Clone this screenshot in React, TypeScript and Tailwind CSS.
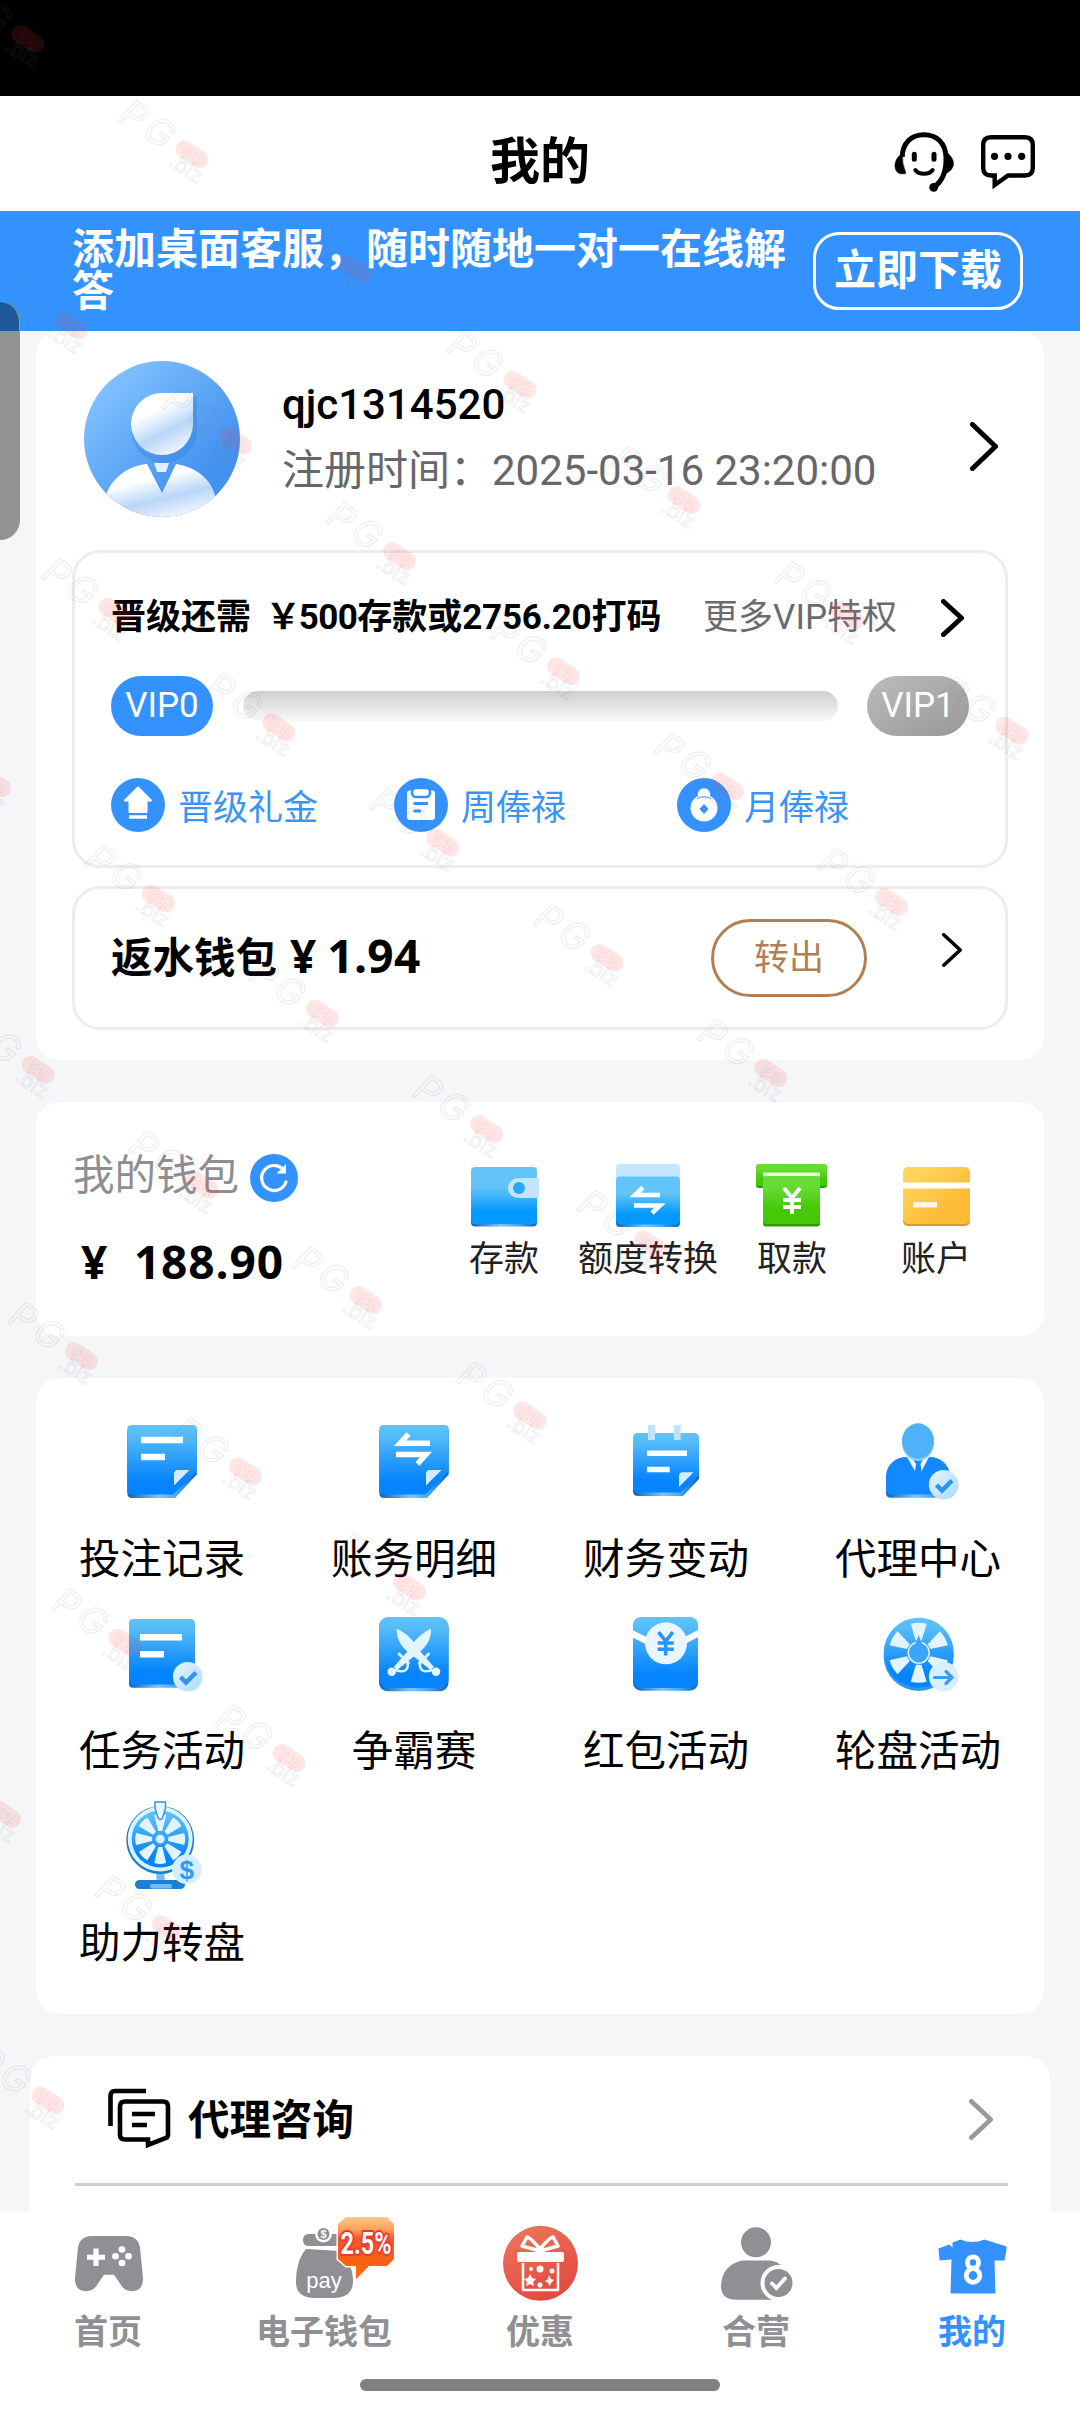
import type { ReactNode } from "react";

const NAV_GRAY = "#8f8f94";

function Defs() {
  return (
    <svg width="0" height="0" className="absolute">
      <defs>
        <linearGradient id="blue" x1="0" y1="0" x2="0" y2="1">
          <stop offset="0" stopColor="#5fc4f8" />
          <stop offset="0.15" stopColor="#56bbf8" />
          <stop offset="0.8" stopColor="#0584fe" />
          <stop offset="1" stopColor="#0584fe" />
        </linearGradient>
        <linearGradient id="sky" x1="0" y1="0" x2="0" y2="1">
          <stop offset="0.35" stopColor="#63c4f8" />
          <stop offset="0.78" stopColor="#0499ff" />
        </linearGradient>
        <linearGradient id="edge" x1="0" y1="0" x2="1" y2="0">
          <stop offset="0" stopColor="#0a63b8" />
          <stop offset="0.45" stopColor="#7cc4fb" />
          <stop offset="0.7" stopColor="#4aa8f8" />
          <stop offset="1" stopColor="#0a63b8" />
        </linearGradient>
        <linearGradient id="pale" x1="0" y1="0" x2="1" y2="1">
          <stop offset="0" stopColor="#e8f6ff" />
          <stop offset="1" stopColor="#a9daff" />
        </linearGradient>
        <linearGradient id="green" x1="0" y1="0" x2="0" y2="1">
          <stop offset="0.2" stopColor="#68dc36" />
          <stop offset="0.7" stopColor="#45c806" />
        </linearGradient>
        <linearGradient id="gold" x1="0" y1="0" x2="1" y2="1">
          <stop offset="0.2" stopColor="#ffd45a" />
          <stop offset="0.7" stopColor="#fcbb36" />
        </linearGradient>
        <linearGradient id="avatar" x1="0" y1="0" x2="1" y2="1">
          <stop offset="0.1" stopColor="#84c4ff" />
          <stop offset="0.75" stopColor="#4392ef" />
        </linearGradient>
        <linearGradient id="face" x1="0.2" y1="0" x2="0.7" y2="1">
          <stop offset="0.3" stopColor="#fff" />
          <stop offset="0.65" stopColor="#b9d6f7" />
          <stop offset="1" stopColor="#f4f8ff" />
        </linearGradient>
        <linearGradient id="red" x1="0" y1="0" x2="0.5" y2="1">
          <stop offset="0" stopColor="#ea7a5c" />
          <stop offset="1" stopColor="#e44b41" />
        </linearGradient>
        <linearGradient id="badge" x1="0" y1="0" x2="0" y2="1">
          <stop offset="0" stopColor="#ffc98a" />
          <stop offset="0.2" stopColor="#fda05c" />
          <stop offset="0.35" stopColor="#f2552a" />
          <stop offset="1" stopColor="#ff6a00" />
        </linearGradient>
      </defs>
    </svg>
  );
}

function Chevron({
  width,
  height,
  stroke,
  color = "#000",
}: {
  width: number;
  height: number;
  stroke: number;
  color?: string;
}) {
  const pad = stroke / 2;
  return (
    <svg width={width} height={height} className="block shrink-0">
      <path
        d={`M${pad} ${pad}L${width - pad} ${height / 2}L${pad} ${height - pad}`}
        fill="none"
        stroke={color}
        strokeWidth={stroke}
        strokeLinecap="round"
        strokeLinejoin="round"
      />
    </svg>
  );
}

function ServiceIcon() {
  return (
    <svg width="62" height="64" viewBox="0 0 62 64" fill="none" stroke="#000">
      <path d="M9.200 26C9.500 12 18 3.800 31 3.800S52.500 12 53 26C53.500 40 50 50 41 56" strokeWidth="5" />
      <path d="M9 23C1 27 -1 40 7 42.800H12.500V40.500Q9 33 9.500 23Z" fill="#000" strokeWidth="0.500" />
      <path d="M53 21C62 27 64 37 53 42.500Q56 32 53 21Z" fill="#000" strokeWidth="0.500" />
      <path d="M21.300 23.300v5M41 23.300v5" strokeWidth="5" strokeLinecap="round" />
      <path d="M22.300 39C26 44 36 44 39.700 39" strokeWidth="4" strokeLinecap="round" />
      <circle cx="40.700" cy="56.300" r="4.400" fill="#000" stroke="none" />
    </svg>
  );
}

function MessageIcon() {
  return (
    <svg width="56" height="56" viewBox="0 0 56 56" fill="none">
      <path
        d="M10 2.200H44Q51.800 2.200 51.800 10V33Q51.800 40.500 44 40.500H27L13.700 50V40.500H10Q2.200 40.500 2.200 33V10Q2.200 2.200 10 2.200Z"
        stroke="#000"
        strokeWidth="4.400"
      />
      <circle cx="13.500" cy="21.300" r="3.600" fill="#000" />
      <circle cx="27" cy="21.300" r="3.600" fill="#000" />
      <circle cx="40.700" cy="21.300" r="3.600" fill="#000" />
    </svg>
  );
}

function Avatar() {
  return (
    <svg width="156" height="156" viewBox="0 0 156 156" className="shrink-0">
      <clipPath id="avatarClip">
        <circle cx="78" cy="78" r="78" />
      </clipPath>
      <g clipPath="url(#avatarClip)">
        <rect width="156" height="156" fill="url(#avatar)" />
        <path d="M78 36H113V66A33 33 0 1 1 78 36Z" fill="#2f7fe0" opacity="0.35" />
        <path d="M78 32H109V63A31 31 0 1 1 78 32Z" fill="url(#face)" />
        <path d="M22 156V134C27 119 42 105 63 103L78 132L92 103C113 106 127 119 131 134V156Z" fill="url(#face)" />
        <path d="M70 102H85L82 111H73Z" fill="#e6f0fd" />
      </g>
    </svg>
  );
}

function UpIcon() {
  return (
    <>
      <path d="M27 9.500L40 22.500H35.500V34H18.500V22.500H14Z" fill="#fff" stroke="#fff" strokeWidth="2" strokeLinejoin="round" />
      <path d="M18 39H36" stroke="#fff" strokeWidth="3.500" />
    </>
  );
}

function ClipIcon() {
  return (
    <>
      <rect x="13" y="12.500" width="28" height="29.500" rx="3" fill="#fff" />
      <rect x="18" y="10" width="18" height="9" rx="4" fill="#fff" stroke="#3492ff" strokeWidth="2.500" />
      <path d="M19.500 25.500H34M19.500 33H27" stroke="#3492ff" strokeWidth="3" />
    </>
  );
}

function PouchIcon() {
  return (
    <>
      <circle cx="27" cy="16.500" r="6.300" fill="#fff" />
      <circle cx="27" cy="30" r="13.500" fill="#fff" />
      <path d="M17 38H37Q35 43 27 43T17 38Z" fill="#fff" />
      <path d="M20 20.500Q27 17 34 20.500" stroke="#3492ff" strokeWidth="1" fill="none" />
      <path d="M27 26L31.500 31L27 36L22.500 31Z" fill="#3492ff" />
    </>
  );
}

function BonusItem({ label, children }: { label: string; children: ReactNode }) {
  return (
    <div className="flex w-[283px] items-center">
      <svg width="54" height="54" viewBox="0 0 54 54">
        <circle cx="27" cy="27" r="27" fill="#3492ff" />
        {children}
      </svg>
      <span className="mt-1 -mb-1 ml-[13px] text-[35px] leading-[54px] text-[#3a95f2]">{label}</span>
    </div>
  );
}

function YenMark({ color = "#fff" }: { color?: string }) {
  return <path d="M-8-12L0-2L8-12M0-2V14M-9 0H9M-9 7H9" stroke={color} strokeWidth="4" fill="none" />;
}

function DepositIcon() {
  return (
    <>
      <rect x="3" y="5" width="66" height="57.500" rx="4" fill="url(#edge)" />
      <rect x="3" y="3" width="66" height="57" rx="4" fill="url(#sky)" />
      <path d="M71 14H50A10 10 0 0 0 50 34H71Z" fill="#c2e5ff" />
      <circle cx="51" cy="24" r="6" fill="#2aa7fb" />
    </>
  );
}

function TransferIcon() {
  return (
    <>
      <rect x="4" y="0" width="64" height="26" rx="4" fill="#c5e6ff" />
      <rect x="4" y="14" width="64" height="49" rx="4" fill="url(#edge)" />
      <rect x="4" y="12.500" width="64" height="48" rx="4" fill="url(#sky)" />
      <path d="M48 31H23L31 23.500M22 41.500H48L40 49" stroke="#fff" strokeWidth="4.500" fill="none" />
    </>
  );
}

function WithdrawIcon() {
  return (
    <>
      <rect x="0" y="2" width="71" height="22" rx="3" fill="#2f9a05" />
      <rect x="0" y="0" width="71" height="22" rx="3" fill="url(#green)" />
      <rect x="7" y="8.500" width="57" height="4" fill="#e5fbd8" />
      <rect x="7" y="13" width="57" height="49.500" rx="3" fill="#2f9a05" />
      <rect x="7" y="12" width="57" height="48" rx="3" fill="url(#green)" />
      <g transform="translate(36 36)">
        <YenMark />
      </g>
    </>
  );
}

function AccountIcon() {
  return (
    <>
      <rect x="3" y="5" width="67" height="57" rx="5" fill="#dc9a1f" />
      <rect x="3" y="3" width="67" height="57" rx="5" fill="url(#gold)" />
      <rect x="2" y="18.500" width="69" height="6" fill="#fff" />
      <rect x="13" y="38" width="24" height="5.500" fill="#fff8e0" />
    </>
  );
}

function PageShape({ children }: { children: ReactNode }) {
  return (
    <>
      <path d="M17 17H79Q82.700 17 82.700 21V64.500L61 88H18Q13.300 88 13.300 83V21Z" fill="url(#edge)" />
      <path d="M17.500 15H78.500Q82.700 15 82.700 19V61.500L59 84.500H17.500Q13.300 84.500 13.300 80.500V19Q13.300 15 17.500 15Z" fill="url(#blue)" />
      <path d="M75.500 60H64Q60 60 60 64V75.500Z" fill="#d3ecff" />
      {children}
    </>
  );
}

function CheckBadge() {
  return (
    <>
      <circle cx="73.700" cy="74.700" r="14.800" fill="url(#pale)" />
      <path d="M66.500 75L72 80.500L82 70.500" stroke="#2e93f5" strokeWidth="4.500" fill="none" />
    </>
  );
}

// a light wedge pointing up from the hub, rotated around the wheel
function Spokes({ count, cx, cy, inner, outer, half }: { count: number; cx: number; cy: number; inner: number; outer: number; half: number }) {
  return (
    <>
      {Array.from({ length: count }, (_, i) => (
        <path
          key={i}
          d={`M${cx - half * 0.35} ${cy - inner}L${cx - half} ${cy - outer + 1}Q${cx} ${cy - outer - 1} ${cx + half} ${cy - outer + 1}L${cx + half * 0.35} ${cy - inner}Z`}
          transform={`rotate(${(360 / count) * i} ${cx} ${cy})`}
          fill="#e3f4ff"
        />
      ))}
    </>
  );
}

function BetRecordIcon() {
  return (
    <PageShape>
      <path d="M27 30H69M27 47H51" stroke="#fff" strokeWidth="6.400" />
    </PageShape>
  );
}

function StatementIcon() {
  return (
    <PageShape>
      <path d="M64 33.300H34L42.500 24M30 44.500H60L51.500 54" stroke="#fff" strokeWidth="5.400" fill="none" />
    </PageShape>
  );
}

function FinanceIcon() {
  return (
    <>
      <path d="M20 26H76Q81 26 81 31V69L65 86H20Q15 86 15 81Z" fill="url(#edge)" />
      <path d="M20 23H76Q81 23 81 28V66L62 82.500H20Q15 82.500 15 77.500V28Q15 23 20 23Z" fill="url(#blue)" />
      <path d="M33.500 15V30M59.200 15V30" stroke="#bfe3ff" strokeWidth="7" />
      <path d="M29 43.200H69M29 59.500H51.700" stroke="#fff" strokeWidth="5.600" />
      <path d="M75.500 62.300H65Q61 62.300 61 66V77Z" fill="#d3ecff" />
    </>
  );
}

function AgentIcon() {
  return (
    <>
      <path d="M16 70V83Q16 87.700 21 87.700H75Q80 87.700 80 83V70Z" fill="url(#edge)" />
      <path d="M16 65C17 54 26 47 36 47H60C70 47 79 54 80 65V84.500H20Q16 84.500 16 80Z" fill="#1289fe" />
      <path d="M37 47L45.500 62L47 50H49L51 62L59 47Z" fill="#eff8ff" />
      <path d="M43.500 50H52.500L50.500 54L51.500 61L48 64L45 61L46 54Z" fill="#1289fe" />
      <ellipse cx="48" cy="32.500" rx="16" ry="18.500" fill="#8fcdfb" />
      <ellipse cx="48" cy="31" rx="16" ry="17.700" fill="#4db2f8" />
      <CheckBadge />
    </>
  );
}

function TaskIcon() {
  return (
    <>
      <rect x="15" y="19" width="65.700" height="66.700" rx="4" fill="url(#edge)" />
      <rect x="15" y="17" width="65.700" height="65.500" rx="4" fill="url(#blue)" />
      <path d="M26 35.200H68M26 52.300H50" stroke="#fff" strokeWidth="6.400" />
      <CheckBadge />
    </>
  );
}

function SwordsIcon() {
  const sword = (
    <>
      <path d="M30.700 26.700C41 31 48 39 53 48L68 65L64.500 68L46 53C37 47 30 38 30.700 26.700Z" />
      <circle cx="70" cy="69.700" r="4.300" />
      <path d="M54 60C53 69 58 71 66 68" fill="none" stroke="#e3f4ff" strokeWidth="2.600" strokeLinecap="round" />
      <path d="M53.500 61L62.500 52" stroke="#e3f4ff" strokeWidth="3" strokeLinecap="round" />
    </>
  );
  return (
    <>
      <rect x="13" y="17" width="69.500" height="72.300" rx="9" fill="url(#edge)" />
      <rect x="13" y="15" width="69.500" height="71" rx="9" fill="url(#blue)" />
      <g fill="#e3f4ff">
        {sword}
        <g transform="translate(95.700 0) scale(-1 1)">{sword}</g>
      </g>
    </>
  );
}

function RedPacketIcon() {
  return (
    <>
      <rect x="15" y="17" width="65" height="71.700" rx="8" fill="url(#edge)" />
      <rect x="15" y="15" width="65" height="71" rx="8" fill="url(#blue)" />
      <path d="M14 31.500L32 40.500M81 31L63 40.500" stroke="#fff" strokeWidth="6.500" />
      <circle cx="48" cy="41.300" r="21" fill="#eaf6ff" />
      <g transform="translate(47.700 41) scale(0.900)">
        <YenMark color="#2b95f5" />
      </g>
    </>
  );
}

function WheelIcon() {
  return (
    <>
      <circle cx="48.700" cy="54" r="35" fill="#2f9ae8" />
      <circle cx="48.700" cy="50.700" r="35" fill="url(#blue)" />
      <Spokes count={6} cx={48.7} cy={50.7} inner={12} outer={30} half={8} />
      <circle cx="48.700" cy="50.700" r="10.500" fill="#3ba6f8" stroke="#d9f0ff" strokeWidth="1.500" />
      <path d="M48.700 33L52 42H45.500Z" fill="#3ba6f8" />
      <circle cx="73.700" cy="74.700" r="14.800" fill="#d9efff" />
      <path d="M64.500 75.500H82M76 69.500L82 75.500L76 81.500" stroke="#3a9cf5" strokeWidth="3.200" fill="none" strokeLinecap="round" />
    </>
  );
}

function BoostWheelIcon() {
  return (
    <>
      <path d="M42.400 78H50.600V90H42.400Z" fill="#7bbdeb" />
      <rect x="21" y="86" width="50" height="9" rx="4.500" fill="#1b80cf" />
      <rect x="36" y="90" width="22" height="4.500" rx="2" fill="#6fbdf5" />
      <circle cx="46.200" cy="46" r="34" fill="#1c7fc9" />
      <circle cx="46.200" cy="45" r="32.500" fill="#d9f3ff" />
      <circle cx="46.200" cy="45" r="28.500" fill="url(#blue)" />
      <Spokes count={8} cx={46.2} cy={45} inner={8} outer={25} half={6} />
      <circle cx="46.200" cy="45" r="5" fill="#d9f3ff" stroke="#4aacf8" strokeWidth="1.500" />
      <path d="M41 8H51.500V14L48.500 24Q46.200 27 44 24L41 14Z" fill="#e9f8ff" stroke="#3794dc" strokeWidth="1.500" />
      <circle cx="72.700" cy="75.300" r="14.700" fill="#d3eeff" />
      <text x="72.700" y="84.500" textAnchor="middle" fontSize="26" fontWeight="700" fill="#319af3" fontFamily="Liberation Sans, sans-serif">
        $
      </text>
    </>
  );
}

const walletActions = [
  { label: "存款", icon: <DepositIcon /> },
  { label: "额度转换", icon: <TransferIcon /> },
  { label: "取款", icon: <WithdrawIcon /> },
  { label: "账户", icon: <AccountIcon /> },
];

const menuItems = [
  { label: "投注记录", icon: <BetRecordIcon /> },
  { label: "账务明细", icon: <StatementIcon /> },
  { label: "财务变动", icon: <FinanceIcon /> },
  { label: "代理中心", icon: <AgentIcon /> },
  { label: "任务活动", icon: <TaskIcon /> },
  { label: "争霸赛", icon: <SwordsIcon /> },
  { label: "红包活动", icon: <RedPacketIcon /> },
  { label: "轮盘活动", icon: <WheelIcon /> },
  { label: "助力转盘", icon: <BoostWheelIcon /> },
];

function HomeTabIcon() {
  return (
    <g transform="translate(15 22) scale(1 0.970)">
      <path
        d="M17 3H51Q63 3 65 15L68 47Q68 60 57 60Q49 60 45 52L39 43H29L23 52Q19 60 11 60Q0 60 0 47L3 15Q5 3 17 3Z"
        fill={NAV_GRAY}
      />
      <path d="M12 25H30M21 16V34" stroke="#fff" strokeWidth="5.200" />
      <circle cx="47" cy="17" r="3.400" fill="#fff" />
      <circle cx="47" cy="31" r="3.400" fill="#fff" />
      <circle cx="40.500" cy="24" r="3.400" fill="#fff" />
      <circle cx="53.500" cy="24" r="3.400" fill="#fff" />
    </g>
  );
}

function WalletTabIcon() {
  return (
    <g transform="translate(7 -2)">
      <path d="M26 25H56V37H26Q20 37 20 31T26 25Z" fill={NAV_GRAY} />
      <circle cx="40.500" cy="25" r="8.500" fill="#fff" />
      <circle cx="40.500" cy="25" r="6" fill={NAV_GRAY} />
      <text x="40.500" y="29" fontSize="11" textAnchor="middle" fill="#fff" fontWeight="700" fontFamily="Liberation Sans, sans-serif">
        $
      </text>
      <path d="M23 40L58 42C66 51 70 62 70 72Q70 89 50 89H32Q13 89 13 73C13 60 16 48 23 40Z" fill={NAV_GRAY} />
      <text x="41" y="79" fontSize="22" textAnchor="middle" fill="#fff" fontFamily="Liberation Sans, sans-serif">
        pay
      </text>
      <path
        d="M63 8H104L111 15V50L104 57H86L73 70V57H63L55 50V15Z"
        fill="url(#badge)"
        stroke="#fff"
        strokeWidth="3"
        paintOrder="stroke"
      />
      <text
        x="83"
        y="45"
        fontSize="32"
        textAnchor="middle"
        textLength="51"
        lengthAdjust="spacingAndGlyphs"
        fill="#fff"
        stroke="#e83a2c"
        strokeWidth="4"
        strokeLinejoin="round"
        paintOrder="stroke"
        fontWeight="700"
        fontFamily="Roboto, sans-serif"
      >
        2.5%
      </text>
    </g>
  );
}

function OfferTabIcon() {
  return (
    <g transform="translate(0 -2)">
      <circle cx="48.500" cy="54.300" r="37.500" fill="url(#red)" />
      <g fill="none" stroke="#fff" strokeWidth="2.500" strokeLinejoin="round">
        <path d="M48 42L30 37L35 28Q37 27 48 40M48 42L66 37L61 28Q59 27 48 40" strokeWidth="3.500" />
        <path d="M31 54V81H66V54" />
      </g>
      <rect x="25" y="43" width="47" height="10" rx="2" fill="#fff" />
      <ellipse cx="48" cy="41" rx="5" ry="3.500" fill="#fff" />
      <path d="M38 65L40 69L44 70L41 73L42 77L38 75L34 77L35 73L32 70L36 69ZM57 66L59 70L62 71L59 74L58 77L56 74L53 72L56 70Z" fill="#fff" />
      <circle cx="48" cy="60" r="3.500" fill="#fff" />
      <circle cx="60" cy="62" r="2.500" fill="#fff" />
      <circle cx="48" cy="76" r="2.500" fill="#fff" />
      <circle cx="39" cy="60" r="2" fill="#fff" />
    </g>
  );
}

function PartnerTabIcon() {
  return (
    <>
      <circle cx="48" cy="31.300" r="15" fill={NAV_GRAY} />
      <path d="M34 49.500H62Q78 51 78 72V88.700H28Q13 88.700 13 75Q14 54 34 49.500Z" fill={NAV_GRAY} />
      <circle cx="70.500" cy="72" r="18" fill="#fff" />
      <path d="M62 84H90V92H66Z" fill="#fff" />
      <path d="M72 50H90V60H80Z" fill="#fff" />
      <circle cx="70.500" cy="72" r="14" fill={NAV_GRAY} />
      <path d="M64 72.500L68.500 77L77 67.500" stroke="#fff" strokeWidth="3.800" fill="none" strokeLinecap="round" />
    </>
  );
}

function MineTabIcon() {
  return (
    <g transform="translate(0.500 -1.500)">
      <path d="M36 30Q48 35 60 30L82 37V40L80 51H70L71 84H26L27 50L15 51L14 39L25 35L28 38L28 33Z" fill="#3492ff" />
      <g fill="none" stroke="#fff" strokeWidth="4.800">
        <circle cx="48.500" cy="53" r="5.600" />
        <circle cx="48.500" cy="66" r="6.800" />
      </g>
    </g>
  );
}

const tabs = [
  { label: "首页", icon: <HomeTabIcon /> },
  { label: "电子钱包", icon: <WalletTabIcon /> },
  { label: "优惠", icon: <OfferTabIcon /> },
  { label: "合营", icon: <PartnerTabIcon /> },
  { label: "我的", icon: <MineTabIcon />, active: true },
];

function watermarkPoints() {
  const points: [number, number][] = [];
  for (let row = 0; row < 9; row++) {
    for (let col = -2; col + row <= 6; col++) {
      if (row === 0 && col < 0) continue;
      points.push([28 + col * 164 + row * 43.5, 39 + col * 115.3 + row * 286.5]);
    }
  }
  return points.filter(([x, y]) => x > -40 && y > 0);
}

function Watermark() {
  return (
    <svg className="pointer-events-none absolute inset-0 z-20" width="1080" height="2412">
      {watermarkPoints().map(([x, y]) => (
        <g key={`${x}-${y}`} transform={`translate(${x} ${y}) rotate(33)`}>
          <text
            x="-82"
            y="12"
            fontSize="37"
            fontStyle="italic"
            letterSpacing="5"
            fill="none"
            stroke="#777"
            strokeOpacity="0.15"
            strokeWidth="1.2"
            fontFamily="Inter, sans-serif"
          >
            PG
          </text>
          <rect x="-18" y="-9" width="36" height="18" rx="9" fill="#ff3b3b" fillOpacity="0.13" />
          <text x="-11" y="5" fontSize="12" fill="#b43c3c" fillOpacity="0.1" fontFamily="'Noto Sans CJK SC', sans-serif">
            论坛
          </text>
          <text x="-15" y="22" fontSize="21" fill="none" stroke="#777" strokeOpacity="0.15" fontFamily="Inter, sans-serif">
            .biz
          </text>
        </g>
      ))}
    </svg>
  );
}

export default function App() {
  return (
    <div className="relative flex h-[2412px] w-[1080px] flex-col overflow-hidden bg-[#f4f6f8] font-[Roboto,'Noto_Sans_CJK_SC',sans-serif] text-black">
      <Defs />
      <div className="h-24 shrink-0 bg-black" />

      <header className="relative flex h-[115px] shrink-0 items-center justify-center bg-white">
        <h1 className="pt-[17px] text-[50px] leading-[60px] font-bold">我的</h1>
        <div className="absolute top-[35px] right-[43px] flex items-start gap-[26px]">
          <ServiceIcon />
          <span className="pt-1">
            <MessageIcon />
          </span>
        </div>
      </header>

      <div className="flex h-[120px] shrink-0 items-start bg-[#3492ff] pr-[57px] pl-[72px] font-bold text-white">
        <p className="w-[720px] pt-[18px] text-[42px] leading-[42px]">添加桌面客服，随时随地一对一在线解答</p>
        <button className="mt-[21px] ml-auto flex h-[78px] w-[210px] items-center justify-center rounded-[26px] border-[3px] border-white text-[42px] leading-none">
          立即下载
        </button>
      </div>

      <section className="mx-9 h-[729px] shrink-0 rounded-3xl bg-white px-9">
        <div className="flex h-[219px] items-start pt-[30px] pl-3">
          <Avatar />
          <div className="ml-[42px] pt-[16px]">
            <div className="text-[42px] leading-[56px] font-medium">qjc1314520</div>
            <div className="mt-[10px] text-[42px] leading-[56px] text-[#67676b]">注册时间：2025-03-16 23:20:00</div>
          </div>
          <div className="mt-[61px] mr-[10px] ml-auto">
            <Chevron width={28} height={49} stroke={5} />
          </div>
        </div>

        <div className="h-[318px] rounded-[28px] border-[3px] border-[#ededed] px-9">
          <div className="mt-[38px] flex h-[50px] items-center pt-1 whitespace-nowrap">
            <span className="text-[35px] font-bold">
              晋级还需 <span className="ml-1.5 -mr-0.5">￥</span>
              <span className="tracking-[-0.6px]">500</span>存款或<span className="tracking-[-0.2px]">2756.20</span>打码
            </span>
            <span className="ml-auto text-[35px] text-[#6b6b6f]">更多VIP特权</span>
            <span className="mr-[5px] ml-[44px]">
              <Chevron width={23} height={38} stroke={5} />
            </span>
          </div>
          <div className="mt-[35px] flex h-[60px] items-center justify-between">
            <span className="flex h-[60px] w-[102px] items-center justify-center rounded-full bg-[#3492ff] text-[35px] text-white">VIP0</span>
            <span className="h-[30px] w-[595px] rounded-full bg-linear-to-b from-[#cfcfcf] to-[#f8f8f8]" />
            <span className="flex h-[60px] w-[102px] items-center justify-center rounded-full bg-linear-to-br from-[#bcbcbc] to-[#989898] text-[35px] text-white">
              VIP1
            </span>
          </div>
          <div className="mt-[42px] flex">
            <BonusItem label="晋级礼金">
              <UpIcon />
            </BonusItem>
            <BonusItem label="周俸禄">
              <ClipIcon />
            </BonusItem>
            <BonusItem label="月俸禄">
              <PouchIcon />
            </BonusItem>
          </div>
        </div>

        <div className="mt-[18px] flex h-[144px] items-start rounded-[28px] border-[3px] border-[#ededed] px-9">
          <span className="pt-[36px] text-[41.5px] leading-[60px] font-bold">
            返水钱包<span className="ml-[13px] font-['Open_Sans'] text-[46px]">¥</span>
            <span className="ml-[11px] font-['Open_Sans'] text-[46px] tracking-[0.3px]">1.94</span>
          </span>
          <button className="mt-[30px] ml-auto flex h-[78px] w-[156px] items-center justify-center rounded-full border-[3px] border-[#b27f53] pt-[3px] text-[35px] text-[#b27f53]">
            转出
          </button>
          <span className="mt-[44px] mr-[7px] ml-[75px]">
            <Chevron width={20} height={34} stroke={3.6} />
          </span>
        </div>
      </section>

      <section className="mx-9 mt-[42px] flex h-[234px] shrink-0 rounded-3xl bg-white pr-9 pl-9">
        <div className="w-[360px] pt-[44px]">
          <div className="flex items-center gap-[11px] pl-px text-[41.5px] leading-[60px] text-[#8e8e92]">
            我的钱包
            <svg width="48" height="48" viewBox="0 0 48 48" className="mt-1">
              <circle cx="24" cy="24" r="24" fill="#3492ff" />
              <path d="M34.500 17A12.500 12.500 0 1 0 36 28" fill="none" stroke="#fff" strokeWidth="3.200" strokeLinecap="round" />
              <path d="M36 10V19.500H26.500Z" fill="#fff" />
            </svg>
          </div>
          <div className="mt-[25px] pl-[9px] font-['Open_Sans'] text-[46px] leading-[60px] font-bold tracking-[0.9px] whitespace-pre">¥  188.90</div>
        </div>
        <div className="flex pt-[62px]">
          {walletActions.map(({ label, icon }) => (
            <div key={label} className="flex w-36 flex-col items-center">
              <svg width="72" height="66" viewBox="0 0 72 66">
                {icon}
              </svg>
              <span className="mt-[7px] text-[35px] leading-[46px] text-[#222]">{label}</span>
            </div>
          ))}
        </div>
      </section>

      <section className="mx-9 mt-[42px] grid h-[636px] shrink-0 auto-rows-[192px] grid-cols-4 rounded-3xl bg-white pt-8">
        {menuItems.map(({ label, icon }) => (
          <div key={label} className="flex flex-col items-center">
            <svg width="96" height="98" viewBox="0 0 96 98">
              {icon}
            </svg>
            <span className="mt-[22px] text-[41.5px] leading-[60px]">{label}</span>
          </div>
        ))}
      </section>

      <section className="mx-[30px] mt-[42px] flex h-[155px] shrink-0 flex-col rounded-t-3xl bg-white pr-[42px] pl-[45px]">
        <div className="flex h-[130px] items-center border-b-3 border-[#cfcfcf] pr-[15px] pb-px pl-[33px]">
          <svg width="63" height="62" viewBox="0 0 63 62" fill="none" stroke="#000" strokeWidth="4.600">
            <path d="M2.500 38V8Q2.500 3 7 3H38" />
            <path d="M17 13.500H55Q60 13.500 60 18.500V47Q60 49 58 50L40 57V51.500H17Q12 51.500 12 46.500V18.500Q12 13.500 17 13.500Z" />
            <path d="M24 26H47M24 37H39" />
          </svg>
          <span className="ml-[17px] pt-1 text-[41.5px] font-bold">代理咨询</span>
          <span className="ml-auto">
            <Chevron width={24} height={41} stroke={4.5} color="#999" />
          </span>
        </div>
      </section>

      <nav className="flex h-[201px] shrink-0 flex-col items-center bg-white">
        <div className="flex">
          {tabs.map(({ label, icon, active }) => (
            <div key={label} className={`flex w-[216px] flex-col items-center ${active ? "text-[#3492ff]" : "text-[#8f8f94]"}`}>
              <svg width="96" height="96" viewBox="0 0 96 96" className="overflow-visible">
                {icon}
              </svg>
              <span className="mt-px text-[34px] leading-[48px] font-bold">{label}</span>
            </div>
          ))}
        </div>
        <div className="mt-[23px] h-3 w-[360px] rounded-full bg-[#808080]" />
      </nav>

      <div className="absolute top-[302px] left-0 z-10 h-[238px] w-5 rounded-r-[20px] border-r border-[#7fae5a] bg-black/40" />
      <Watermark />
    </div>
  );
}
